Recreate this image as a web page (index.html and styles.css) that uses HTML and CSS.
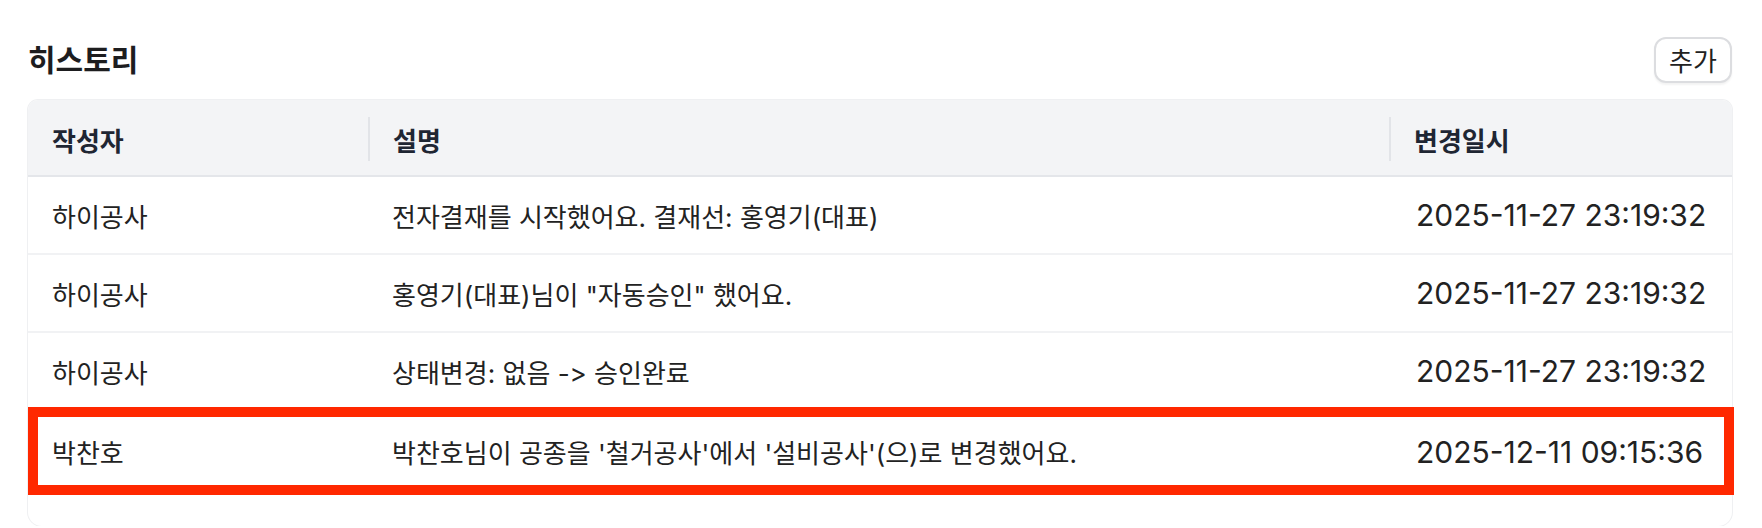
FILE: index.html
```html
<!DOCTYPE html>
<html lang="ko">
<head>
    <meta charset="UTF-8">
    <meta name="viewport" content="width=device-width, initial-scale=1.0">
    <title>히스토리</title>
    <link rel="stylesheet" href="styles.css">
</head>
<body>
    <div class="history">
        <div class="history-head">
            <h2 class="history-title">히스토리</h2>
            <button class="btn-add">추가</button>
        </div>

        <div class="history-table">
            <div class="row row-head">
                <div class="cell">작성자</div>
                <div class="cell sep">설명</div>
                <div class="cell sep">변경일시</div>
            </div>
            <div class="row">
                <div class="cell">하이공사</div>
                <div class="cell">전자결재를 시작했어요. 결재선: 홍영기(대표)</div>
                <div class="cell date">2025-11-27 23:19:32</div>
            </div>
            <div class="row">
                <div class="cell">하이공사</div>
                <div class="cell">홍영기(대표)님이 "자동승인" 했어요.</div>
                <div class="cell date">2025-11-27 23:19:32</div>
            </div>
            <div class="row">
                <div class="cell">하이공사</div>
                <div class="cell">상태변경: 없음 -&gt; 승인완료</div>
                <div class="cell date">2025-11-27 23:19:32</div>
            </div>
            <div class="row is-marked">
                <div class="cell">박찬호</div>
                <div class="cell">박찬호님이 공종을 '철거공사'에서 '설비공사'(으)로 변경했어요.</div>
                <div class="cell date">2025-12-11 09:15:36</div>
            </div>
        </div>
    </div>
</body>
</html>
```

FILE: styles.css
```css
body {
    margin: 0;
    font-family: "Inter", "Noto Sans CJK KR", sans-serif;
    color: #222;
    background: #fff;
}
.history {
    padding: 37px 30px 0 28px;
}
.history-head {
    display: flex;
    justify-content: space-between;
    align-items: center;
    height: 46px;
    margin-bottom: 17px;
}
.history-title {
    margin: 0;
    font-size: 30px;
    font-weight: 700;
    line-height: 1;
    color: #1d1d1f;
}
.btn-add {
    width: 78px;
    height: 46px;
    padding: 0 0 2px;
    border: 2px solid #dcdde0;
    border-radius: 12px;
    background: #fff;
    font-family: inherit;
    font-size: 26px;
    color: #222;
    box-shadow: 0 2px 2px rgba(0, 0, 0, 0.05);
}
.history-table {
    border-radius: 10px 10px 14px 14px;
    box-shadow: 0 0 0 1px #eff0f2;
    padding-bottom: 37px;
}
.row {
    display: grid;
    grid-template-columns: 340px 1021px 1fr;
    align-items: center;
    box-sizing: border-box;
    height: 78px;
    border-bottom: 2px solid #f1f2f4;
    font-size: 26px;
}
.cell {
    padding: 0 24px;
    white-space: nowrap;
}
.row-head {
    height: 77px;
    padding-top: 3px;
    align-items: stretch;
    background: #f3f4f6;
    border-bottom-color: #e4e6ea;
    border-radius: 10px 10px 0 0;
    font-weight: 700;
    color: #1f2633;
}
.row-head .cell {
    display: flex;
    align-items: center;
}
.row-head .sep {
    padding-left: 25px;
    background: linear-gradient(#e2e4e8, #e2e4e8) left center / 2px 44px no-repeat;
}
.date {
    padding-left: 27px;
    font-size: 30px;
}
.is-marked {
    position: relative;
    padding-top: 5px;
}
.is-marked::after {
    content: "";
    position: absolute;
    top: -4px;
    bottom: -8px;
    left: 0;
    right: -2px;
    border: 10px solid #ff2800;
    pointer-events: none;
}
```
